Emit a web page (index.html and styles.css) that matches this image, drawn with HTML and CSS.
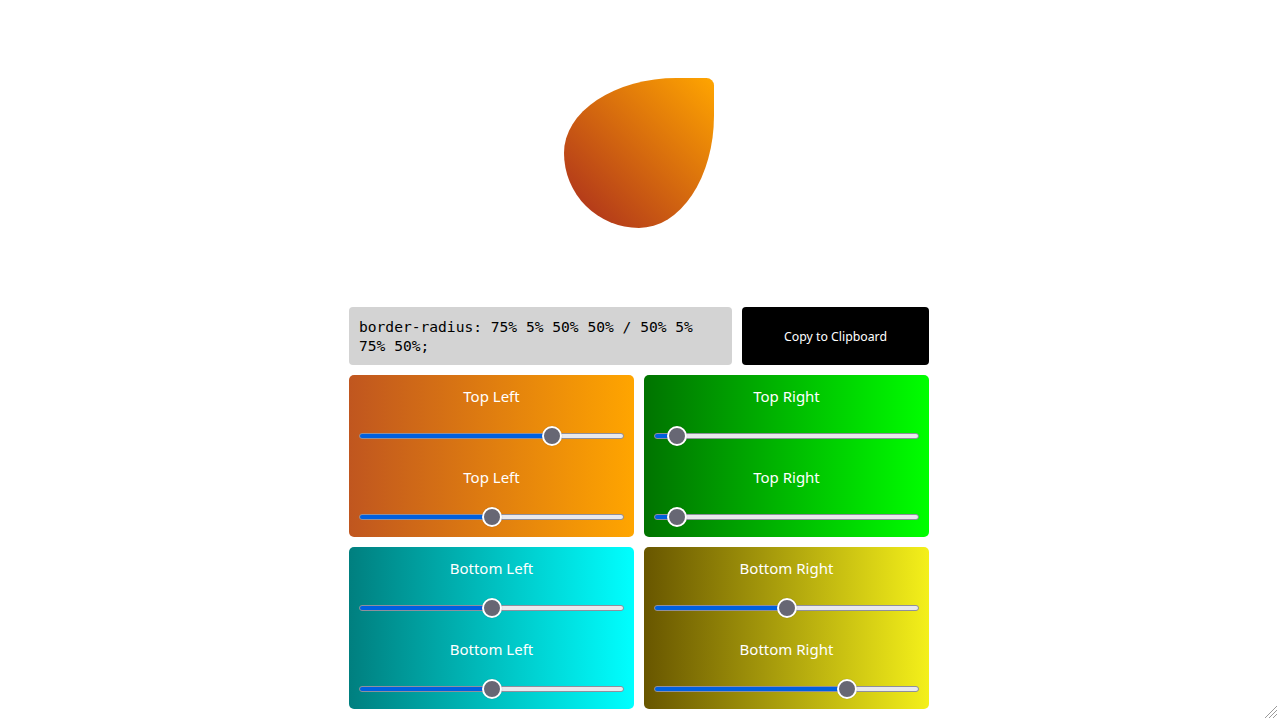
FILE: index.html
```html
<!DOCTYPE html>
<html lang="en">
<head>
<meta charset="utf-8">
<title>Border Radius Generator</title>
<link rel="stylesheet" href="styles.css">
</head>
<body>
<main class="page">
  <div class="shape"></div>
  <div class="controls">
    <div class="output-row">
      <div class="code">border-radius: 75% 5% 50% 50% / 50% 5% 75% 50%;</div>
      <button class="copy">Copy to Clipboard</button>
    </div>
    <div class="grid">
      <section class="panel panel-tl">
        <label class="label">Top Left</label>
        <input class="range" type="range" min="0" max="100" value="75" style="--v:75">
        <label class="label">Top Left</label>
        <input class="range" type="range" min="0" max="100" value="50" style="--v:50">
      </section>
      <section class="panel panel-tr">
        <label class="label">Top Right</label>
        <input class="range" type="range" min="0" max="100" value="5" style="--v:5">
        <label class="label">Top Right</label>
        <input class="range" type="range" min="0" max="100" value="5" style="--v:5">
      </section>
      <section class="panel panel-bl">
        <label class="label">Bottom Left</label>
        <input class="range" type="range" min="0" max="100" value="50" style="--v:50">
        <label class="label">Bottom Left</label>
        <input class="range" type="range" min="0" max="100" value="50" style="--v:50">
      </section>
      <section class="panel panel-br">
        <label class="label">Bottom Right</label>
        <input class="range" type="range" min="0" max="100" value="50" style="--v:50">
        <label class="label">Bottom Right</label>
        <input class="range" type="range" min="0" max="100" value="75" style="--v:75">
      </section>
    </div>
  </div>
</main>
<svg class="grip" width="14" height="14" viewBox="0 0 14 14">
  <line x1="13" y1="1" x2="1" y2="13" stroke="#9a9a9a" stroke-width="1"/>
  <line x1="13" y1="5" x2="5" y2="13" stroke="#9a9a9a" stroke-width="1"/>
  <line x1="13" y1="9" x2="9" y2="13" stroke="#9a9a9a" stroke-width="1"/>
</svg>
</body>
</html>
```
FILE: styles.css
```css
html, body {
  margin: 0;
  padding: 0;
  background: #ffffff;
}

body {
  font-family: "Noto Sans", "Open Sans", sans-serif;
  overflow: hidden;
}

.page {
  display: flex;
  flex-direction: column;
  align-items: center;
  padding-top: 78px;
}

.shape {
  width: 150px;
  height: 150px;
  border-radius: 75% 5% 50% 50% / 50% 5% 75% 50%;
  background: linear-gradient(45deg, #a82a1e 0%, #ffa500 100%);
  margin-bottom: 79px;
}

.controls {
  width: 580px;
  display: flex;
  flex-direction: column;
  gap: 10px;
}

.output-row {
  display: flex;
  gap: 10px;
  height: 58px;
}

.code {
  flex: 0 0 383px;
  box-sizing: border-box;
  background: #d3d3d3;
  border-radius: 4px;
  padding: 11px 10px 9px;
  font-family: "DejaVu Sans Mono", "Liberation Mono", monospace;
  font-size: 14.6px;
  line-height: 18.5px;
  color: #000;
}

.copy {
  flex: 1;
  background: #000;
  color: #fff;
  border: none;
  border-radius: 4px;
  font-family: "Noto Sans", "Open Sans", sans-serif;
  font-size: 12.3px;
  padding: 0;
  cursor: pointer;
}

.grid {
  display: grid;
  grid-template-columns: 285px 285px;
  gap: 10px;
}

.panel {
  box-sizing: border-box;
  height: 162px;
  border-radius: 5px;
  padding: 10px;
  display: flex;
  flex-direction: column;
}

.panel-tl { background: linear-gradient(to right, #c0561f, #ffa500); }
.panel-tr { background: linear-gradient(to right, #007300, #00ff00); }
.panel-bl { background: linear-gradient(to right, #007f7f, #00ffff); }
.panel-br { background: linear-gradient(to right, #685600, #f4f01a); }

.label {
  display: block;
  text-align: center;
  color: #ffffff;
  font-size: 15px;
  line-height: 22px;
  height: 22px;
  margin-bottom: 19px;
}

.range + .label {
  margin-top: 20px;
}

.range {
  -webkit-appearance: none;
  appearance: none;
  display: block;
  width: 265px;
  height: 20px;
  margin: 0;
  padding: 0;
  background: transparent;
  --p: calc(10px + (100% - 20px) * var(--v) / 100);
}

.range::-webkit-slider-runnable-track {
  height: 6px;
  box-sizing: border-box;
  border: 1px solid #8f8f9d;
  border-radius: 4px;
  background: linear-gradient(to right, #0060df 0, #0060df var(--p), #e9e9ed var(--p), #e9e9ed 100%);
}

.range::-webkit-slider-thumb {
  -webkit-appearance: none;
  appearance: none;
  width: 20px;
  height: 20px;
  box-sizing: border-box;
  border-radius: 50%;
  background: #676774;
  border: 2px solid #ffffff;
  margin-top: -8px;
  box-shadow: 0 0 1px rgba(0, 0, 0, 0.3);
}

.range:focus {
  outline: none;
}

.grip {
  position: fixed;
  right: 0;
  bottom: 0;
}
```
